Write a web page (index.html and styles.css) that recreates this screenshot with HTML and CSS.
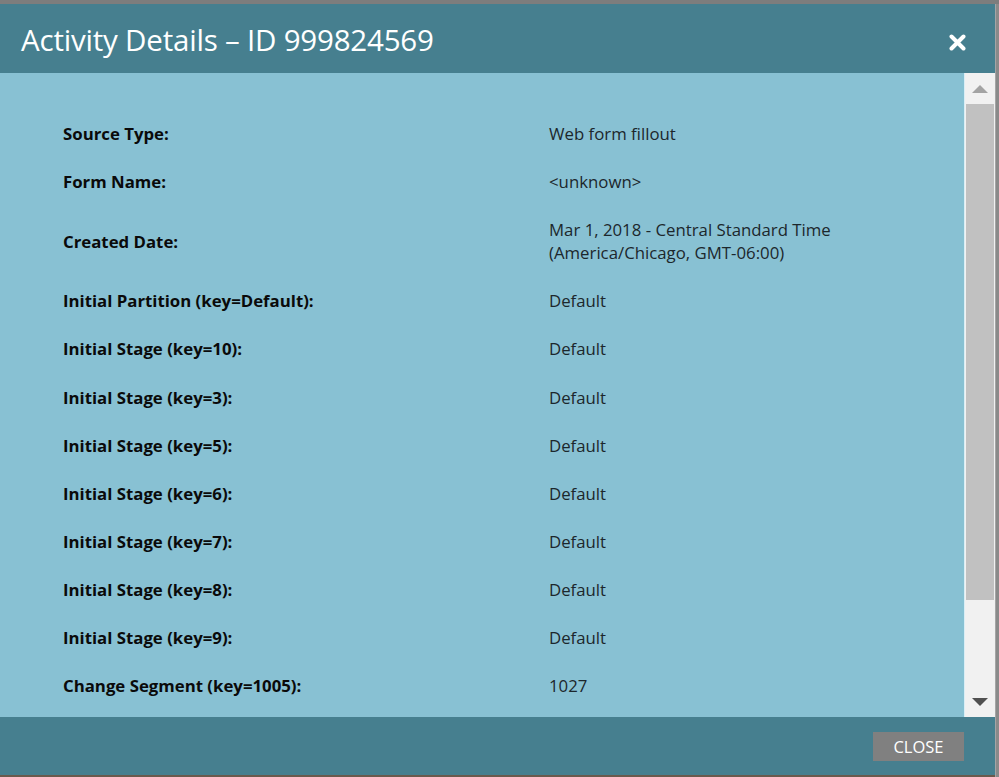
FILE: index.html
```html
<!DOCTYPE html>
<html>
<head>
<meta charset="utf-8">
<link rel="stylesheet" href="styles.css">
</head>
<body>
<div class="page">
  <div class="dialog">
    <div class="header">
      <h1 class="title">Activity Details – ID 999824569</h1>
      <svg class="close-x" width="17" height="17" viewBox="0 0 17 17"><path d="M2.5 2.5 L14.5 14.5 M14.5 2.5 L2.5 14.5" stroke="#fff" stroke-width="4" stroke-linecap="round"/></svg>
    </div>
    <div class="body">
      <div class="content">
        <div class="grid">
          <div class="label">Source Type:</div><div class="value">Web form fillout</div>
          <div class="label">Form Name:</div><div class="value">&lt;unknown&gt;</div>
          <div class="label">Created Date:</div><div class="value">Mar 1, 2018 - Central Standard Time<br>(America/Chicago, GMT-06:00)</div>
          <div class="label">Initial Partition (key=Default):</div><div class="value">Default</div>
          <div class="label">Initial Stage (key=10):</div><div class="value">Default</div>
          <div class="label">Initial Stage (key=3):</div><div class="value">Default</div>
          <div class="label">Initial Stage (key=5):</div><div class="value">Default</div>
          <div class="label">Initial Stage (key=6):</div><div class="value">Default</div>
          <div class="label">Initial Stage (key=7):</div><div class="value">Default</div>
          <div class="label">Initial Stage (key=8):</div><div class="value">Default</div>
          <div class="label">Initial Stage (key=9):</div><div class="value">Default</div>
          <div class="label">Change Segment (key=1005):</div><div class="value">1027</div>
        </div>
      </div>
      <div class="scrollbar">
        <div class="sb-btn"><span class="arrow-up"></span></div>
        <div class="sb-track"><div class="sb-thumb"></div></div>
        <div class="sb-btn"><span class="arrow-down"></span></div>
      </div>
    </div>
    <div class="footer">
      <button class="close-btn">CLOSE</button>
    </div>
  </div>
  <div class="side"></div>
</div>
</body>
</html>
```
FILE: styles.css
```css
html, body {
  margin: 0;
  padding: 0;
  width: 999px;
  height: 777px;
  overflow: hidden;
  font-family: "Open Sans", "Liberation Sans", sans-serif;
}
body {
  background: #7d7d7d;
}
.page {
  display: flex;
  padding-top: 4px;
  height: 773px;
}
.dialog {
  width: 995px;
  height: 771px;
  display: flex;
  flex-direction: column;
  border-bottom: 2px solid #6a5a4d;
}
.side {
  flex: 1;
  background: #8a8a8a;
  border-left: 1px solid #a5a5a5;
}
.header {
  height: 69px;
  background: #467f8f;
  display: flex;
  align-items: center;
  justify-content: space-between;
  padding: 0 29px 0 21px;
}
.title {
  margin: 0;
  color: #fff;
  font-weight: 400;
  font-size: 29.5px;
  letter-spacing: -0.2px;
  margin-top: 2px;
}
.close-x {
  display: block;
  margin-top: 7px;
}
.body {
  height: 644px;
  display: flex;
  background: #88c1d3;
}
.content {
  flex: 1;
  overflow: hidden;
}
.grid {
  display: grid;
  grid-template-columns: 486px 1fr;
  row-gap: 25px;
  align-items: center;
  padding: 49px 0 0 63px;
  font-size: 16.8px;
  line-height: 23.1px;
}
.label {
  font-weight: 700;
  color: #0a0a0a;
}
.value {
  color: #1c272c;
}
.scrollbar {
  width: 30px;
  background: #f1f1f1;
  border-left: 1px solid #d9eef5;
  display: flex;
  flex-direction: column;
}
.sb-btn {
  height: 31px;
  display: flex;
  align-items: center;
  justify-content: center;
}
.arrow-up {
  width: 0;
  height: 0;
  border-left: 8px solid transparent;
  border-right: 8px solid transparent;
  border-bottom: 8px solid #a3a3a3;
}
.arrow-down {
  width: 0;
  height: 0;
  border-left: 8px solid transparent;
  border-right: 8px solid transparent;
  border-top: 8px solid #505050;
}
.sb-track {
  flex: 1;
  padding: 0 1px 0 1px;
}
.sb-thumb {
  height: 496px;
  background: #c1c1c1;
}
.footer {
  flex: 1;
  background: #467f8f;
  display: flex;
  justify-content: flex-end;
  align-items: flex-start;
  padding: 15px 31px 0 0;
}
.close-btn {
  width: 91px;
  height: 29px;
  border: none;
  background: #808080;
  color: #fff;
  font-family: "Open Sans", "Liberation Sans", sans-serif;
  font-size: 16.5px;
  padding: 0;
  cursor: pointer;
}
```
